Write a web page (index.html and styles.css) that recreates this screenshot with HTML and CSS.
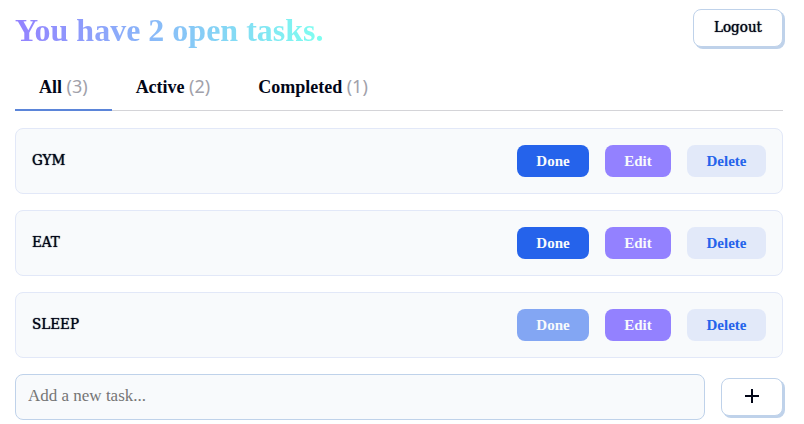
FILE: index.html
```html
<!DOCTYPE html>
<html lang="en">
<head>
<meta charset="utf-8">
<meta name="viewport" content="width=device-width, initial-scale=1">
<title>Tasks</title>
<link rel="stylesheet" href="styles.css">
</head>
<body>
<main class="app">
  <header class="header">
    <h1 class="title">You have 2 open tasks.</h1>
    <button class="outline-button" type="button">Logout</button>
  </header>
  <nav class="tabs">
    <a class="tab tab-active" href="#all">All <span class="count">(3)</span></a>
    <a class="tab" href="#active">Active <span class="count">(2)</span></a>
    <a class="tab" href="#completed">Completed <span class="count">(1)</span></a>
  </nav>
  <ul class="tasks">
    <li class="task">
      <span class="task-name">GYM</span>
      <div class="actions">
        <button class="action done" type="button">Done</button>
        <button class="action edit" type="button">Edit</button>
        <button class="action delete" type="button">Delete</button>
      </div>
    </li>
    <li class="task">
      <span class="task-name">EAT</span>
      <div class="actions">
        <button class="action done" type="button">Done</button>
        <button class="action edit" type="button">Edit</button>
        <button class="action delete" type="button">Delete</button>
      </div>
    </li>
    <li class="task">
      <span class="task-name">SLEEP</span>
      <div class="actions">
        <button class="action done" type="button" disabled>Done</button>
        <button class="action edit" type="button">Edit</button>
        <button class="action delete" type="button">Delete</button>
      </div>
    </li>
  </ul>
  <form class="add">
    <input class="add-input" type="text" placeholder="Add a new task..." aria-label="New task">
    <button class="outline-button add-button" type="button" aria-label="Add task">
      <svg width="16" height="16" viewBox="0 0 16 16" aria-hidden="true"><path d="M8 1v14M1 8h14" stroke="currentColor" stroke-width="2"/></svg>
    </button>
  </form>
</main>
</body>
</html>
```
FILE: styles.css
```css
* {
  box-sizing: border-box;
}

body {
  margin: 0;
  background: #fff;
  color: #020617;
  font-family: "Liberation Serif", serif;
}

button,
input {
  font: inherit;
}

.app {
  padding: 9px 21px 4px 15px;
}

.header {
  display: flex;
  align-items: center;
  justify-content: space-between;
  height: 38px;
}

.title {
  margin: 0;
  padding-top: 4px;
  font-size: 32px;
  line-height: 40px;
  font-weight: 700;
  color: transparent;
  background: linear-gradient(to right, #9381ff, #7efff0);
  background-clip: text;
  -webkit-background-clip: text;
}

.outline-button {
  display: flex;
  align-items: center;
  justify-content: center;
  height: 38px;
  padding: 0 20px 2px;
  border: 1px solid #bfd2ea;
  border-radius: 8px;
  background: #fff;
  color: #020617;
  box-shadow: 2px 2px 0 #bfd2ea;
  font-family: "DejaVu Serif Condensed", "DejaVu Serif", serif;
  font-size: 15px;
  text-shadow: 0 0 1px currentColor;
}

.tabs {
  display: flex;
  margin-top: 16px;
  border-bottom: 1px solid #d4d4d8;
}

.tab {
  margin-bottom: -1px;
  padding: 12px 24px 10px;
  border-bottom: 2px solid transparent;
  color: #020617;
  font-size: 18px;
  line-height: 24px;
  font-weight: 700;
  text-decoration: none;
}

.tab-active {
  border-bottom-color: #5b85d9;
}

.count {
  color: #a1a1aa;
  font-family: "Noto Sans", sans-serif;
  font-size: 18px;
  font-weight: 400;
  line-height: 20px;
}

.tasks {
  display: grid;
  gap: 16px;
  margin: 17px 0 16px;
  padding: 0;
  list-style: none;
}

.task {
  display: flex;
  align-items: center;
  justify-content: space-between;
  padding: 16px;
  border: 1px solid #e2e8f8;
  border-radius: 8px;
  background: #f8fafc;
}

.task-name {
  padding-bottom: 2px;
  font-family: "DejaVu Serif Condensed", "DejaVu Serif", serif;
  font-size: 15px;
  line-height: 30px;
  text-shadow: 0 0 1px currentColor;
}

.actions {
  display: flex;
  gap: 16px;
}

.action {
  height: 32px;
  padding: 0;
  border: 0;
  border-radius: 8px;
  color: #f8fafc;
  font-size: 15px;
  font-weight: 700;
}

.done {
  width: 72px;
  background: #2563eb;
}

.done:disabled {
  background: #83a6f3;
}

.edit {
  width: 66px;
  background: #9381ff;
}

.delete {
  width: 79px;
  background: #e2e9f9;
  color: #2563eb;
}

.add {
  display: flex;
  align-items: center;
  gap: 16px;
}

.add-input {
  flex: 1;
  min-width: 0;
  height: 46px;
  padding: 0 12px 2px;
  border: 1px solid #bfd2ea;
  border-radius: 8px;
  background: #f8fafc;
  color: #020617;
  font-size: 17px;
}

.add-input::placeholder {
  color: #757575;
}

.add-button {
  width: 62px;
}
```
